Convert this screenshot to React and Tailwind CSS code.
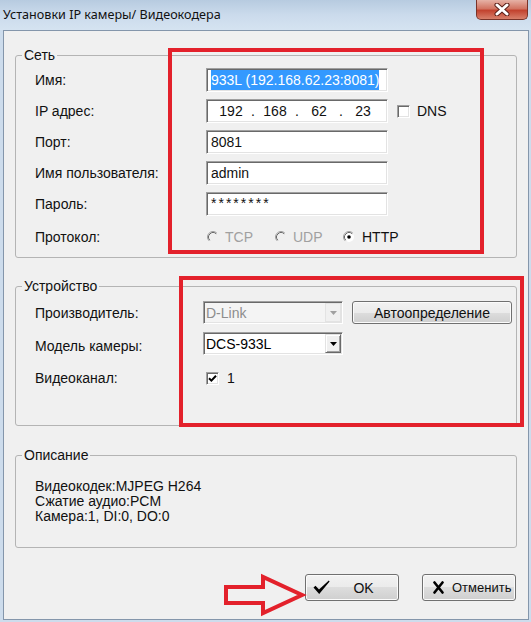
import React from "react";

const sunken =
  "border border-t-[#a0a0a0] border-l-[#a0a0a0] border-b-white border-r-white shadow-[inset_1px_1px_0_#696969,inset_-1px_-1px_0_#e3e3e3]";
const raised =
  "border border-t-[#e3e3e3] border-l-[#e3e3e3] border-b-[#696969] border-r-[#696969] shadow-[inset_1px_1px_0_#ffffff,inset_-1px_-1px_0_#a0a0a0]";
const winBtn =
  "rounded-[3px] border border-[#707070] bg-[linear-gradient(180deg,#f2f2f2_0%,#ebebeb_50%,#dddddd_50%,#cfcfcf_100%)] shadow-[inset_0_0_0_1px_#fbfbfb]";

function Radio({ checked, disabled }) {
  return (
    <svg width="12" height="12" viewBox="0 0 12 12" className="shrink-0">
      <circle cx="6" cy="6" r="5" fill={disabled ? "#f0f0f0" : "#ffffff"} />
      <path d="M2.11 9.89 A5.5 5.5 0 0 1 9.89 2.11" fill="none" stroke="#a0a0a0" strokeWidth="1" />
      <path d="M2.82 9.18 A4.5 4.5 0 0 1 9.18 2.82" fill="none" stroke="#696969" strokeWidth="1" />
      {checked && <circle cx="6" cy="6" r="1.8" fill="#000" />}
    </svg>
  );
}

function Check({ checked }) {
  return (
    <div className={`w-[13px] h-[13px] bg-white shrink-0 flex items-center justify-center ${sunken}`}>
      {checked && (
        <svg width="9" height="9" viewBox="0 0 9 9">
          <path d="M1 4.2 L3.4 6.6 L8 1.8" stroke="#000" strokeWidth="2" fill="none" />
        </svg>
      )}
    </div>
  );
}

function Arrow({ color }) {
  return (
    <svg width="7" height="4" viewBox="0 0 7 4">
      <path d="M0 0 L7 0 L3.5 4 Z" fill={color} />
    </svg>
  );
}

function Combo({ text, disabled }) {
  return (
    <div className={`w-[140px] h-[23px] flex ${disabled ? "bg-[#f4f4f4]" : "bg-white"} ${sunken}`}>
      <div className={`flex-1 pl-[2px] flex items-center leading-[16px] ${disabled ? "text-[#8d8d8d]" : "text-black"}`}>
        {text}
      </div>
      <div className={`w-[16px] my-[1px] mr-[1px] flex items-center justify-center bg-[#f0f0f0] ${disabled ? "border border-[#e3e3e3]" : raised}`}>
        <Arrow color={disabled ? "#a0a0a0" : "#000"} />
      </div>
    </div>
  );
}

function Field({ children, className = "" }) {
  return (
    <div className={`w-[182px] h-[24px] bg-white flex items-center leading-[16px] ${sunken} ${className}`}>
      {children}
    </div>
  );
}

function Label({ children, w = "w-[171px]" }) {
  return <div className={`${w} shrink-0 leading-[16px]`}>{children}</div>;
}

export default function App() {
  return (
    <div className="relative w-[531px] h-[622px] bg-[#cddcec] font-['Liberation_Sans',Arial,sans-serif] text-[14px] text-[#111] overflow-hidden">
      {/* Title bar */}
      <div className="h-[30px] flex items-start justify-between bg-[linear-gradient(180deg,#b7cbe0_0%,#cbdbec_50%,#d5e3f1_100%)]">
        <div className="pl-[3px] pt-[6px] font-['Noto_Sans',sans-serif] text-[12.6px] leading-[18px] text-[#111]">
          Установки IP камеры/ Видеокодера
        </div>
        <div className="mr-[3px] w-[52px] h-[20px] rounded-b-[5px] border border-t-0 border-[#7a3328] bg-[linear-gradient(180deg,#e6b2a6_0%,#d27462_45%,#c2432f_55%,#d8806b_100%)] flex items-center justify-center">
          <svg width="16" height="13" viewBox="0 0 16 13">
            <path d="M3 2 L13 11 M13 2 L3 11" stroke="#5a1f18" strokeWidth="5" strokeLinecap="round" />
            <path d="M3 2 L13 11 M13 2 L3 11" stroke="#ffffff" strokeWidth="3" strokeLinecap="round" />
          </svg>
        </div>
      </div>

      {/* Client area */}
      <div className="ml-[3px] w-[526px] h-[590px] border border-[#8496ab] bg-[#f0f0f0] px-[11px] flex flex-col">
        {/* Сеть */}
        <fieldset className="mt-[16px] border border-[#b4b4b4] rounded-[3px] pt-[5px] pb-[12px]">
          <legend className="ml-[6px] px-[2px] leading-[16px]">Сеть</legend>
          <div className="pl-[19px] flex flex-col gap-[7px]">
            <div className="flex items-center h-[24px]">
              <Label>Имя:</Label>
              <Field className="overflow-hidden">
                <span className="ml-[4px] bg-[#3399ff] text-white leading-[20px] whitespace-nowrap">
                  933L (192.168.62.23:8081)
                </span>
              </Field>
            </div>
            <div className="flex items-center h-[24px]">
              <Label>IP адрес:</Label>
              <Field className="pl-[5px]">
                <span className="w-[38px] text-center">192</span>
                <span className="w-[6px] text-center">.</span>
                <span className="w-[38px] text-center">168</span>
                <span className="w-[6px] text-center">.</span>
                <span className="w-[38px] text-center">62</span>
                <span className="w-[6px] text-center">.</span>
                <span className="w-[38px] text-center">23</span>
              </Field>
              <div className="ml-[9px] flex items-center gap-[7px]">
                <Check />
                <span className="leading-[16px]">DNS</span>
              </div>
            </div>
            <div className="flex items-center h-[24px]">
              <Label>Порт:</Label>
              <Field className="pl-[4px]">8081</Field>
            </div>
            <div className="flex items-center h-[24px]">
              <Label>Имя пользователя:</Label>
              <Field className="pl-[4px]">admin</Field>
            </div>
            <div className="flex items-center h-[24px]">
              <Label>Пароль:</Label>
              <Field className="pl-[4px] items-start pt-[3px]">
                <span className="text-[14px] leading-[14px] tracking-[2px]">********</span>
              </Field>
            </div>
            <div className="flex items-center h-[16px] mt-[6px]">
              <Label>Протокол:</Label>
              <div className="ml-[1px] flex items-center">
                <div className="w-[68px] flex items-center gap-[6px] text-[#a0a0a0]">
                  <Radio disabled />
                  <span className="leading-[16px]">TCP</span>
                </div>
                <div className="w-[68px] flex items-center gap-[6px] text-[#a0a0a0]">
                  <Radio disabled />
                  <span className="leading-[16px]">UDP</span>
                </div>
                <div className="w-[68px] flex items-center gap-[7px]">
                  <Radio checked />
                  <span className="leading-[16px]">HTTP</span>
                </div>
              </div>
            </div>
          </div>
        </fieldset>

        {/* Устройство */}
        <fieldset className="mt-[20px] border border-[#b4b4b4] rounded-[3px] pt-[7px] pb-[39px]">
          <legend className="ml-[6px] px-[2px] leading-[16px]">Устройство</legend>
          <div className="pl-[19px] flex flex-col">
            <div className="flex items-center h-[23px]">
              <Label w="w-[168px]">Производитель:</Label>
              <Combo text="D-Link" disabled />
              <div className={`ml-[9px] w-[160px] h-[23px] flex items-center justify-center leading-[16px] ${winBtn}`}>
                Автоопределение
              </div>
            </div>
            <div className="flex items-center h-[23px] mt-[8px]">
              <Label w="w-[168px]">
                <span className="relative top-[2px]">Модель камеры:</span>
              </Label>
              <Combo text="DCS-933L" />
            </div>
            <div className="flex items-center h-[16px] mt-[15px]">
              <Label>Видеоканал:</Label>
              <Check checked />
              <span className="ml-[8px] leading-[16px]">1</span>
            </div>
          </div>
        </fieldset>

        {/* Описание */}
        <fieldset className="mt-[21px] border border-[#b4b4b4] rounded-[3px] pt-[16px] pb-[23px]">
          <legend className="ml-[6px] px-[2px] leading-[16px]">Описание</legend>
          <div className="pl-[19px] leading-[15px]">
            <div>Видеокодек:MJPEG H264</div>
            <div>Сжатие аудио:PCM</div>
            <div>Камера:1, DI:0, DO:0</div>
          </div>
        </fieldset>

        {/* Buttons */}
        <div className="mt-[26px] flex justify-end gap-[23px] pr-[1px]">
          <div className={`w-[94px] h-[27px] flex items-center pl-[7px] ${winBtn}`}>
            <svg width="17" height="15" viewBox="0 0 17 15" className="shrink-0">
              <path d="M0.5 7.5 L2.5 5.8 L6 9.6 L15.8 0.6 L16.6 1.6 L6.2 14 Z" fill="#000" />
            </svg>
            <span className="flex-1 text-center leading-[16px] pr-[1px]">OK</span>
          </div>
          <div className={`w-[94px] h-[27px] flex items-center pl-[10px] ${winBtn}`}>
            <svg width="11" height="13" viewBox="0 0 11 13" className="shrink-0">
              <path d="M1.5 1.5 L9.5 11.5 M9.5 1.5 L1.5 11.5" stroke="#000" strokeWidth="2.6" strokeLinecap="round" />
            </svg>
            <span className="ml-[8px] text-[13px] leading-[16px] whitespace-nowrap">Отменить</span>
          </div>
        </div>
      </div>

      {/* Red annotations */}
      <div className="absolute left-[168px] top-[48px] w-[316px] h-[206px] border-4 border-[#e3212b]" />
      <div className="absolute left-[179px] top-[276px] w-[345px] h-[151px] border-4 border-[#e3212b]" />
      <svg className="absolute left-[220px] top-[570px]" width="90" height="50" viewBox="0 0 90 50">
        <polygon
          points="6,17 43,17 43,7 82,25 43,43 43,33 6,33"
          fill="none"
          stroke="#e3212b"
          strokeWidth="4"
          strokeLinejoin="miter"
        />
      </svg>
    </div>
  );
}
